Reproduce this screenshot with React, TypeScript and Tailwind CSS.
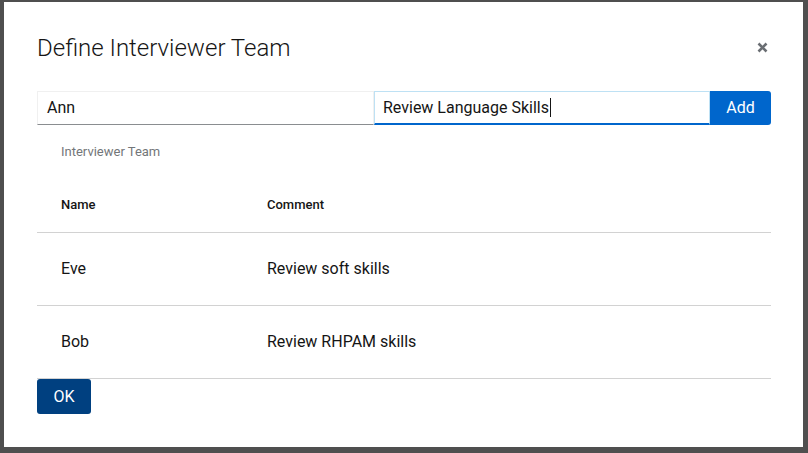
import React from 'react';

const rows = [
  { name: 'Eve', comment: 'Review soft skills' },
  { name: 'Bob', comment: 'Review RHPAM skills' },
];

const App = () => {
  return (
    <div
      className="h-screen w-full bg-[#4f4f4f] pt-[2px] pl-[4px] pr-[5px] pb-[6px] text-[#151515]"
      style={{ fontFamily: 'Roboto, "Liberation Sans", Arial, sans-serif' }}
    >
      <div className="h-full bg-white pt-[31px] pl-[33px] pr-[32px]">
        <div className="flex items-center justify-between">
          <h1 className="text-[24px] leading-[31px] font-light text-[#151515]">Define Interviewer Team</h1>
          <button className="mr-[3px] mt-[-3px] text-[#6a6e73]" aria-label="Close">
            <svg width="11" height="11" viewBox="0 0 11 11">
              <path d="M1.5 1.5 L9.5 9.5 M9.5 1.5 L1.5 9.5" stroke="currentColor" strokeWidth="2.6" />
            </svg>
          </button>
        </div>

        <div className="mt-[27px] flex h-[34px] w-[734px]">
          <div className="flex w-[337px] items-center border border-[#f0f0f0] border-b-[#8a8d90] pl-[9px] text-[16px]">
            Ann
          </div>
          <div className="flex w-[336px] items-center border border-[#bee1f4] border-b-2 border-b-[#0066cc] pl-[8px] text-[16px]">
            <span>Review Language Skills</span>
            <span className="ml-[1px] inline-block h-[19px] w-[1px] bg-[#151515]" />
          </div>
          <button className="w-[61px] rounded-r-[3px] bg-[#0066cc] text-[16px] text-white">Add</button>
        </div>

        <div className="flex h-[53px] items-center pl-6 text-[13px] text-[#737679]">Interviewer Team</div>

        <div className="w-[734px]">
          <div className="grid h-[55px] grid-cols-[206px_1fr] items-center border-b border-[#d2d2d2] text-[13px] font-medium">
            <div className="pl-6">Name</div>
            <div className="pl-6">Comment</div>
          </div>
          {rows.map((r) => (
            <div
              key={r.name}
              className="grid h-[73px] grid-cols-[206px_1fr] items-center border-b border-[#d2d2d2] text-[16px]"
            >
              <div className="pl-6">{r.name}</div>
              <div className="pl-6">{r.comment}</div>
            </div>
          ))}
        </div>

        <button className="h-[35px] w-[54px] rounded-[3px] bg-[#004080] text-[16px] text-white">OK</button>
      </div>
    </div>
  );
};

export default App;
